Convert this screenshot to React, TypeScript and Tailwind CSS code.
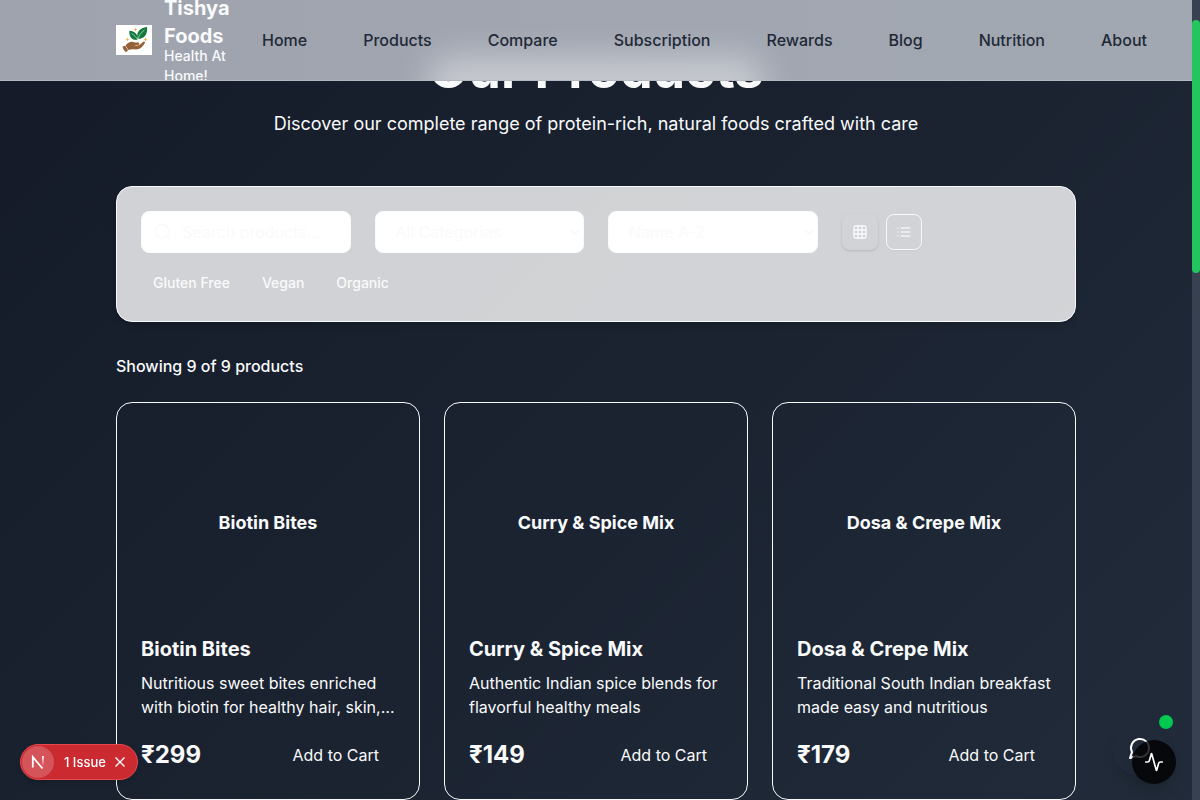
import { Activity, Search } from "lucide-react";

const links = ["Home", "Products", "Compare", "Subscription", "Rewards", "Blog", "Nutrition", "About"];

const products = [
  { name: "Biotin Bites", text: "Nutritious sweet bites enriched with biotin for healthy hair, skin, and nails", price: "₹299" },
  { name: "Curry & Spice Mix", text: "Authentic Indian spice blends for flavorful healthy meals", price: "₹149" },
  { name: "Dosa & Crepe Mix", text: "Traditional South Indian breakfast made easy and nutritious", price: "₹179" },
];

const field =
  "h-[42px] w-full rounded-lg border border-gray-50 bg-white py-2 text-base text-gray-50 placeholder:text-gray-50";

function Logo() {
  return (
    <svg viewBox="0 0 36 30" className="h-[30px] w-9 shrink-0" aria-hidden="true">
      <rect width="36" height="30" fill="#fff" />
      <path d="M21.500 13.500C20 7.500 23.500 2.800 31 2c.8 6.500-2 11.500-8.300 12z" fill="#137a3c" />
      <path d="M21.500 15C16.500 15.500 13 12.500 13.300 5.800c5.500.3 8.700 3 8.200 9.200z" fill="#137a3c" />
      <path d="M28.500 5c-4 3-6 6-6.800 10M15.500 8.500c3 2 5.300 4 6 6.500" stroke="#e8f5e9" strokeWidth=".6" fill="none" />
      <path d="M9.500 20.500c2.500-3 5-4.200 7.500-3.500 1.500.5 3 .6 5 .5 1.800 0 1.800 2.200 0 2.400l-4 .4c2.500.7 4.500.3 6-.8l3-2.600c1.300-1 2.700.2 1.600 1.600-2 3.200-4.600 5.900-8.600 5.900-3 0-5-.5-7.500.7z" fill="#956238" />
      <path d="M6.500 21.500l2.600-.8 3 4.600-2.100 1.900c-1.800-1.300-3-3.500-3.500-5.700z" fill="#956238" />
      <path d="M19.500 2.500l.6 1.400 1.400.6-1.400.6-.6 1.400-.6-1.400-1.400-.6 1.400-.6zM11.500 12.500l.6 1.400 1.400.6-1.400.6-.6 1.400-.6-1.400-1.400-.6 1.400-.6zM29.500 12.500l.6 1.400 1.400.6-1.400.6-.6 1.400-.6-1.400-1.400-.6 1.400-.6z" fill="#f0b040" />
    </svg>
  );
}

function Header() {
  return (
    <header className="fixed top-0 right-2 left-0 z-20 h-[81px] overflow-hidden border-b border-[#b3b7bf] bg-linear-to-r from-[#9fa3ae] to-[#a2a8b2]">
      <div className="absolute top-14 left-1/2 h-16 w-[336px] -translate-x-1/2 rounded-3xl bg-white/40 blur-lg" />
      <div className="relative mx-auto flex h-20 max-w-6xl items-center gap-8 px-24">
        <a href="#" className="flex items-center gap-3">
          <Logo />
          <span className="flex w-[66px] flex-col text-gray-50">
            <span className="text-xl leading-7 font-bold">Tishya Foods</span>
            <span className="-mt-1 text-sm leading-5 font-medium">Health At Home!</span>
          </span>
        </a>
        <nav className="flex shrink-0 gap-14">
          {links.map((link) => (
            <a key={link} href="#" className="font-medium text-[#1f2937]">
              {link}
            </a>
          ))}
        </nav>
      </div>
    </header>
  );
}

function Filters() {
  return (
    <section className="rounded-2xl border border-gray-50 bg-white/80 p-6 shadow-md">
      <div className="grid grid-cols-4 items-center gap-6">
        <div className="relative">
          <Search className="absolute top-[11px] left-3 size-5 text-gray-50" />
          <input aria-label="Search products" placeholder="Search products..." className={`${field} pr-4 pl-10`} />
        </div>
        <select aria-label="Category" className={`${field} px-4`}>
          <option>All Categories</option>
        </select>
        <select aria-label="Sort by" className={`${field} px-4`}>
          <option>Name A-Z</option>
        </select>
        <div className="flex gap-2">
          <button aria-label="Grid view" className="flex size-9 items-center justify-center rounded-lg text-gray-50 shadow-sm">
            <svg viewBox="0 0 24 24" className="size-4" fill="none" stroke="currentColor" strokeWidth="2" strokeLinecap="round">
              <rect x="3" y="3" width="18" height="18" rx="2" />
              <path d="M3 9h18M3 15h18M9 3v18M15 3v18" />
            </svg>
          </button>
          <button aria-label="List view" className="flex size-9 items-center justify-center rounded-lg border border-gray-50 text-gray-100 shadow-xs">
            <svg viewBox="0 0 24 24" className="size-4" fill="none" stroke="currentColor" strokeWidth="2" strokeLinecap="round">
              <path d="M8 6h13M8 12h13M8 18h13M3 6h.01M3 12h.01M3 18h.01" />
            </svg>
          </button>
        </div>
      </div>
      <div className="mt-4 flex gap-2">
        {["Gluten Free", "Vegan", "Organic"].map((tag) => (
          <button key={tag} className="rounded-full px-3 py-1 text-sm leading-5 font-medium text-gray-50">
            {tag}
          </button>
        ))}
      </div>
    </section>
  );
}

function IssueBadge() {
  return (
    <div className="fixed bottom-5 left-5 z-30 flex h-9 items-center rounded-full border border-[#e5484d] bg-[#ca2a30] pr-[11px] pl-px text-white shadow-md">
      <button aria-label="Open developer tools" className="flex size-8 items-center justify-center rounded-full bg-white/20">
        <svg viewBox="0 0 32 32" className="size-8" fill="none" strokeWidth="1.800">
          <defs>
            <linearGradient id="stem" x1="0" y1="10" x2="0" y2="20" gradientUnits="userSpaceOnUse">
              <stop stopColor="#fff" />
              <stop offset="1" stopColor="#fff" stopOpacity="0" />
            </linearGradient>
          </defs>
          <path d="M10.800 21.500V11l9.700 11.500" stroke="#fff" />
          <path d="M20.900 10v10" stroke="url(#stem)" />
        </svg>
      </button>
      <button className="ml-2.5 text-[13px] leading-5 font-medium">1 Issue</button>
      <button aria-label="Dismiss" className="ml-2">
        <svg viewBox="0 0 12 12" className="size-3" stroke="currentColor" strokeWidth="1.400">
          <path d="M1.500 1.500l9 9M10.500 1.500l-9 9" />
        </svg>
      </button>
    </div>
  );
}

export default function App() {
  return (
    <div className="h-screen overflow-hidden bg-linear-135 from-[#141a28] to-[#212b39] pr-2 font-['Inter',sans-serif] text-gray-50">
      <Header />
      <main className="mx-auto max-w-6xl px-24 pt-[46px]">
        <div className="mb-12 text-center">
          <h1 className="mb-4 text-[52px] leading-[48px] font-bold">Our Products</h1>
          <p className="text-lg leading-7">Discover our complete range of protein-rich, natural foods crafted with care</p>
        </div>
        <Filters />
        <p className="mt-8 mb-6 font-medium">Showing 9 of 9 products</p>
        <div className="grid grid-cols-3 gap-6">
          {products.map((p) => (
            <article key={p.name} className="rounded-2xl border border-gray-50 p-6">
              <div className="mb-4 flex h-48 items-center justify-center text-lg font-bold">{p.name}</div>
              <h2 className="mb-2 text-xl leading-7 font-bold">{p.name}</h2>
              <p className="mb-4 line-clamp-2 leading-6">{p.text}</p>
              <div className="flex items-center justify-between">
                <span className="text-2xl font-bold">{p.price}</span>
                <button className="h-10 px-4">Add to Cart</button>
              </div>
            </article>
          ))}
        </div>
      </main>

      <button aria-label="Open chat" className="fixed right-8 bottom-6 flex size-14 items-center justify-center rounded-full text-white shadow-lg">
        <svg viewBox="0 0 24 24" className="size-6" fill="none" stroke="currentColor" strokeWidth="2" strokeLinecap="round" strokeLinejoin="round">
          <path d="M7.900 20A9 9 0 1 0 4 16.100L2 22Z" />
        </svg>
        <span className="absolute -top-[5px] -right-[5px] size-3.5 rounded-full bg-[#00c950]" />
      </button>
      <button aria-label="Performance" className="fixed right-6 bottom-4 flex size-11 items-center justify-center rounded-full bg-black/80 text-white shadow-lg">
        <Activity className="size-5" />
      </button>
      <IssueBadge />
      <div className="fixed top-0 right-0 bottom-0 z-30 w-2 bg-[#374151] pt-5">
        <div className="h-[253px] rounded-full bg-[#22c55e]" />
      </div>
    </div>
  );
}
